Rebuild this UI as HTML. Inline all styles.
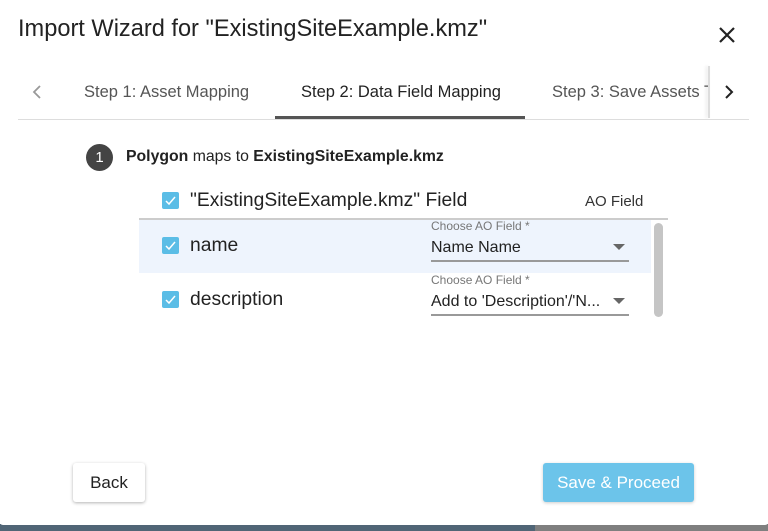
<!DOCTYPE html>
<html><head><style>
*{margin:0;padding:0;box-sizing:border-box}
body{width:768px;height:531px;overflow:hidden;background:#fff;font-family:"Liberation Sans",sans-serif;position:relative;color:#222}
.a{position:absolute;white-space:nowrap}
.cb{position:absolute;width:17px;height:17px;background:#5bbde6;border-radius:2px}
.cb svg{position:absolute;left:2px;top:2px}
.lbl{font-size:12px;color:#777}
.sel{font-size:16px;color:#222}
.ul{position:absolute;height:2px;background:#999;width:198px}
.tri{position:absolute;width:0;height:0;border-left:6px solid transparent;border-right:6px solid transparent;border-top:6px solid #666}
</style></head><body>
<div class="a" style="left:18px;top:16px;font-size:23.6px;color:#222">Import Wizard for "ExistingSiteExample.kmz"</div>
<svg class="a" style="left:718px;top:26px" width="18" height="18"><path d="M2 2L16 16M16 2L2 16" stroke="#222" stroke-width="2.2"/></svg>
<svg class="a" style="left:32px;top:85px" width="10" height="14"><path d="M8 1L2 7L8 13" stroke="#999" stroke-width="1.8" fill="none"/></svg>
<div class="a" style="left:84px;top:83px;font-size:16.5px;color:#555">Step 1: Asset Mapping</div>
<div class="a" style="left:301px;top:83px;font-size:16.5px;color:#222">Step 2: Data Field Mapping</div>
<div class="a" style="left:275px;top:116px;width:250px;height:3px;background:#555"></div>
<div class="a" style="left:552px;top:83px;font-size:16.5px;color:#555;width:157px;overflow:hidden">Step 3: Save Assets To</div>
<div class="a" style="left:708px;top:66px;width:2px;height:52px;background:#ddd;box-shadow:-2px 0 3px rgba(0,0,0,.1)"></div>
<svg class="a" style="left:724px;top:85px" width="10" height="14"><path d="M2 1L8 7L2 13" stroke="#222" stroke-width="2" fill="none"/></svg>
<div class="a" style="left:18px;top:119px;width:731px;height:1px;background:#ddd"></div>
<div class="a" style="left:86px;top:144px;width:27px;height:27px;border-radius:50%;background:#444;color:#fff;font-size:15px;text-align:center;line-height:27px">1</div>
<div class="a" style="left:126px;top:148px;font-size:15.8px"><b>Polygon</b> maps to <b>ExistingSiteExample.kmz</b></div>
<div class="cb" style="left:162px;top:192px"><svg width="13" height="13"><path d="M2 7L5 10L11 3" stroke="#fff" stroke-width="1.5" fill="none"/></svg></div>
<div class="a" style="left:190px;top:190px;font-size:19.3px">"ExistingSiteExample.kmz" Field</div>
<div class="a" style="left:585px;top:193px;font-size:15px;color:#333">AO Field</div>
<div class="a" style="left:139px;top:218px;width:529px;height:2px;background:#ccc"></div>
<div class="a" style="left:139px;top:220px;width:512px;height:53px;background:#eef4fd"></div>
<div class="a" style="left:654px;top:223px;width:9px;height:94px;border-radius:5px;background:#c5c5c5"></div>
<div class="cb" style="left:162px;top:237px"><svg width="13" height="13"><path d="M2 7L5 10L11 3" stroke="#fff" stroke-width="1.5" fill="none"/></svg></div>
<div class="a" style="left:190px;top:235px;font-size:19.3px">name</div>
<div class="a lbl" style="left:431px;top:219px">Choose AO Field *</div>
<div class="a sel" style="left:431px;top:239px">Name Name</div>
<div class="tri" style="left:613px;top:244px"></div>
<div class="ul" style="left:431px;top:260px"></div>
<div class="cb" style="left:162px;top:291px"><svg width="13" height="13"><path d="M2 7L5 10L11 3" stroke="#fff" stroke-width="1.5" fill="none"/></svg></div>
<div class="a" style="left:190px;top:289px;font-size:19.3px">description</div>
<div class="a lbl" style="left:431px;top:273px">Choose AO Field *</div>
<div class="a sel" style="left:431px;top:293px">Add to 'Description'/'N...</div>
<div class="tri" style="left:613px;top:298px"></div>
<div class="ul" style="left:431px;top:314px"></div>
<div class="a" style="left:73px;top:463px;width:72px;height:39px;background:#fff;border-radius:3px;box-shadow:0 1px 3px rgba(0,0,0,.3);font-size:17px;text-align:center;line-height:39px">Back</div>
<div class="a" style="left:543px;top:463px;width:151px;height:39px;background:#6cc4ea;border-radius:3px;box-shadow:0 1px 3px rgba(0,0,0,.2);font-size:17px;color:#fff;text-align:center;line-height:39px">Save &amp; Proceed</div>
<div class="a" style="left:0;top:524px;width:535px;height:7px;background:#506576"></div>
<div class="a" style="left:535px;top:524px;width:233px;height:7px;background:#7f7f7f"></div>
<div class="a" style="left:0;top:522px;width:768px;height:3px;background:#fff;border-radius:0 0 4px 4px"></div>
</body></html>
